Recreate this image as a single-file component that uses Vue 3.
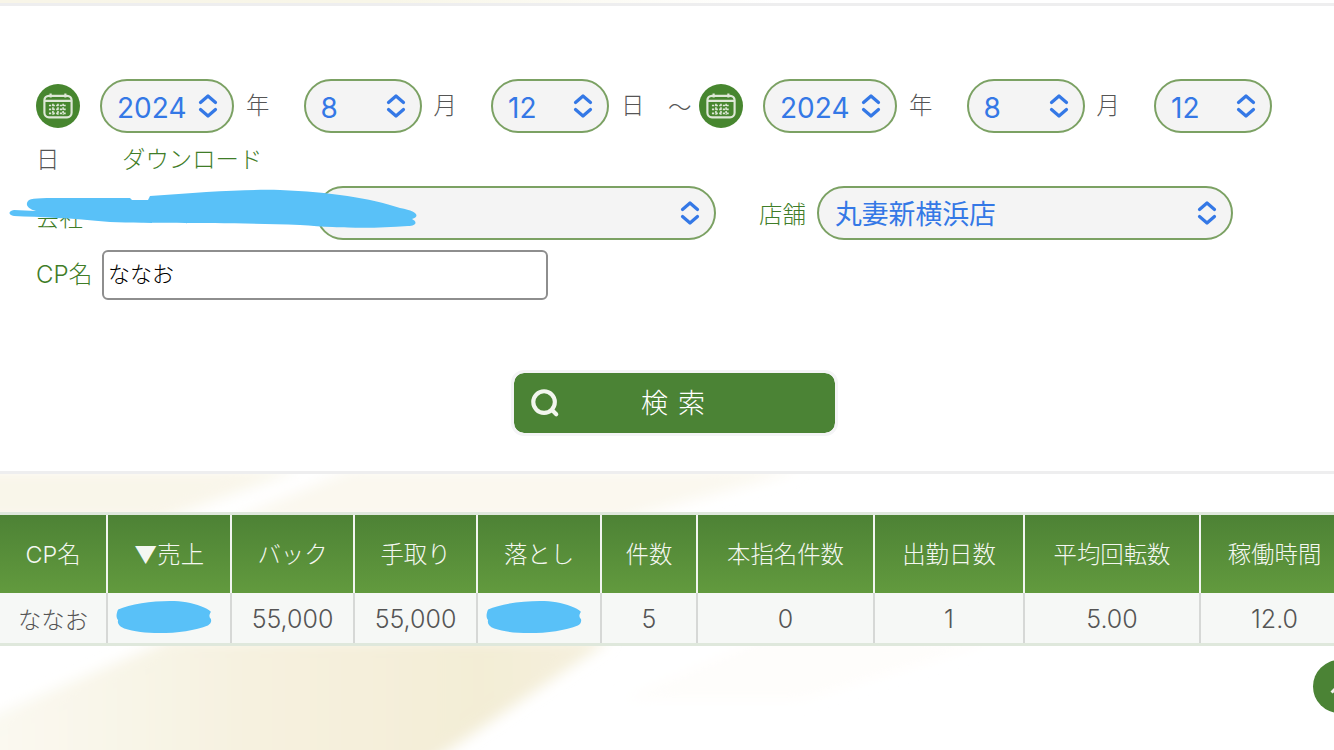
<script setup>
const columns = [
  { label: 'CP名', value: 'ななお', width: 107 },
  { label: '▼売上', value: '', width: 124 },
  { label: 'バック', value: '55,000', width: 123 },
  { label: '手取り', value: '55,000', width: 123 },
  { label: '落とし', value: '', width: 124 },
  { label: '件数', value: '5', width: 96 },
  { label: '本指名件数', value: '0', width: 177 },
  { label: '出勤日数', value: '1', width: 150 },
  { label: '平均回転数', value: '5.00', width: 176 },
  { label: '稼働時間', value: '12.0', width: 148 }
]
const dateRange = [
  { first: true, year: '2024', month: '8', day: '12' },
  { first: false, year: '2024', month: '8', day: '12' }
]
</script>

<template>
  <div class="page">
    <svg class="backdrop" viewBox="0 0 1334 750" preserveAspectRatio="none" aria-hidden="true">
      <defs>
        <linearGradient id="band" x1="0" y1="0.5" x2="1" y2="0.5">
          <stop offset="0" stop-color="#fbfaf3" />
          <stop offset="0.45" stop-color="#f6f1df" />
          <stop offset="0.8" stop-color="#f3edd6" />
          <stop offset="1" stop-color="#f5f0dd" />
        </linearGradient>
        <linearGradient id="strip" x1="0" y1="0" x2="1" y2="0">
          <stop offset="0" stop-color="#f8f5e8" />
          <stop offset="0.5" stop-color="#f8f6e8" />
          <stop offset="1" stop-color="#ffffff" />
        </linearGradient>
        <filter id="soft" x="-10%" y="-10%" width="120%" height="120%"><feGaussianBlur stdDeviation="7" /></filter>
      </defs>
      <g filter="url(#soft)">
        <path d="M-40 520 L-40 470 L300 470 L160 520Z" fill="#f9f6ea" />
        <path d="M230 520 L350 470 L800 470 L620 520Z" fill="#fbf8ef" />
        <path d="M-40 790 L-40 730 L170 640 L610 640 L390 790Z" fill="url(#band)" />
        <path d="M620 700 L760 640 L1000 640 L800 700Z" fill="#fefdfb" />
      </g>
      <path d="M0 0 H780 V3 H0Z" fill="url(#strip)" />
    </svg>

    <section class="panel">
      <div class="dates">
        <template v-for="(range, i) in dateRange" :key="i">
          <span class="cal">
            <svg width="34" height="34" viewBox="0 0 30 30" fill="none" stroke="#dfe8d8" stroke-width="1.9">
              <rect x="3" y="6" width="24" height="19" rx="4" />
              <path d="M8.5 4v3.5M21.5 4v3.5M3 10.5h24" />
              <path d="M7 14.5h16M7 18h16M7 21.5h16M10.5 13v10M15 13v10M19.5 13v10" stroke-width="1.4" stroke-dasharray="2 1.2" />
            </svg>
          </span>
          <div class="sel year">
            <span class="num">{{ range.year }}</span>
            <svg class="updown" width="20" height="26" viewBox="0 0 20 26" fill="none" stroke="#3478e6" stroke-width="3.2" stroke-linecap="round" stroke-linejoin="round"><path d="M2.5 9.5 10 3l7.5 6.5M2.5 16.5 10 23l7.5-6.5" /></svg>
          </div>
          <span class="unit">年</span>
          <div class="sel small">
            <span class="num">{{ range.month }}</span>
            <svg class="updown" width="20" height="26" viewBox="0 0 20 26" fill="none" stroke="#3478e6" stroke-width="3.2" stroke-linecap="round" stroke-linejoin="round"><path d="M2.5 9.5 10 3l7.5 6.5M2.5 16.5 10 23l7.5-6.5" /></svg>
          </div>
          <span class="unit">月</span>
          <div class="sel small">
            <span class="num">{{ range.day }}</span>
            <svg class="updown" width="20" height="26" viewBox="0 0 20 26" fill="none" stroke="#3478e6" stroke-width="3.2" stroke-linecap="round" stroke-linejoin="round"><path d="M2.5 9.5 10 3l7.5 6.5M2.5 16.5 10 23l7.5-6.5" /></svg>
          </div>
          <span class="unit day" :class="{ tail: !range.first }">日</span>
          <span v-if="range.first" class="tilde">〜</span>
        </template>
        <a class="download">ダウンロード</a>
      </div>

      <div class="shop-row">
        <span class="label company">会社</span>
        <div class="sel company-sel">
          <span></span>
          <svg class="updown" width="20" height="26" viewBox="0 0 20 26" fill="none" stroke="#3478e6" stroke-width="3.2" stroke-linecap="round" stroke-linejoin="round"><path d="M2.5 9.5 10 3l7.5 6.5M2.5 16.5 10 23l7.5-6.5" /></svg>
        </div>
        <span class="label shop">店舗</span>
        <div class="sel shop-sel">
          <span class="name">丸妻新横浜店</span>
          <svg class="updown" width="20" height="26" viewBox="0 0 20 26" fill="none" stroke="#3478e6" stroke-width="3.2" stroke-linecap="round" stroke-linejoin="round"><path d="M2.5 9.5 10 3l7.5 6.5M2.5 16.5 10 23l7.5-6.5" /></svg>
        </div>
        <svg class="scribble top" width="430" height="60" viewBox="0 0 430 60" aria-hidden="true">
          <path d="M14 30 L36 31 C28 29 25 25 28 21 C30 18 40 18 60 18 L130 18 L132 20 L148 20 L150 16 C200 12 250 9 280 10 C330 12 370 18 400 28 C418 31 420 37 412 39 C418 42 416 46 408 46 C370 49 340 48 300 45 C220 42 160 44 110 42 C70 38 40 37 14 36 C8 35 8 31 14 30Z" fill="#59c1f8" />
        </svg>
      </div>

      <div class="name-row">
        <span class="label">CP名</span>
        <input class="name-input" value="ななお" />
      </div>

      <div class="actions">
        <button class="search" type="button">
          <svg class="lens" width="30" height="30" viewBox="0 0 32 32" fill="none" stroke="#f2f6ee" stroke-width="4.4" stroke-linecap="round"><circle cx="15" cy="15" r="11.5" /><path d="M24 24l4 4" /></svg>
          <span class="search-text">検 索</span>
        </button>
      </div>
    </section>

    <div class="table-wrap">
      <table>
        <colgroup>
          <col v-for="c in columns" :key="c.label" :style="{ width: c.width + 'px' }" />
        </colgroup>
        <thead>
          <tr><th v-for="c in columns" :key="c.label"><span class="th-text">{{ c.label }}</span></th></tr>
        </thead>
        <tbody>
          <tr>
            <td v-for="c in columns" :key="c.label">
              <template v-if="c.value">{{ c.value }}</template>
              <svg v-else class="scribble cell" width="102" height="38" viewBox="0 0 100 36" preserveAspectRatio="none" aria-hidden="true">
                <path d="M5 10C20 3 55 0 72 3c10 2 20 5 24 9-2 3-2 5 0 7 1 3-1 5-3 6-20 8-60 10-82 3-5-2-7-5-6-8-2-2-2-6 0-10z" fill="#59c1f8" />
              </svg>
            </td>
          </tr>
        </tbody>
      </table>
    </div>

    <div class="to-top"></div>
  </div>
</template>

<style>
html, body { margin: 0; background: #fff; }
</style>

<style scoped>
.page {
  position: relative;
  width: 1334px;
  height: 750px;
  overflow: hidden;
  padding-top: 3px;
  box-sizing: border-box;
  font-family: "Inter", "Noto Sans CJK JP", sans-serif;
  font-size: 23.4px;
  font-weight: 300;
  color: #555;
}
.backdrop { position: absolute; inset: 0; width: 100%; height: 100%; }
.panel {
  position: relative;
  background: #fff;
  border-top: 3px solid #eeeeef;
  border-bottom: 3px solid #eeeeef;
  height: 471px;
  box-sizing: border-box;
  padding: 73px 36px 0;
}
.dates { display: flex; flex-wrap: wrap; align-items: center; }
.cal {
  width: 44px;
  height: 44px;
  border-radius: 50%;
  background: #47862f;
  display: flex;
  align-items: center;
  justify-content: center;
  margin-right: 20px;
  flex: none;
}
.sel {
  display: flex;
  align-items: center;
  justify-content: space-between;
  height: 54px;
  box-sizing: border-box;
  border: 2px solid #7ba163;
  border-radius: 27px;
  background: #f4f4f4;
  color: #3478e6;
  padding: 0 14px 0 14px;
  flex: none;
}
.year { width: 134px; }
.small { width: 118px; }
.num {
  font-size: 28px;
  font-weight: 400;
  padding: 3px 0 0 1px;
}
.unit {
  width: 57.5px;
  padding-left: 12px;
  line-height: 54px;
  height: 54px;
  flex: none;
}
.day { width: 47px; }
.tail { width: 30px; padding-left: 0; height: 30px; line-height: 30px; margin-top: 12px; }
.tilde { width: 31px; flex: none; color: #555; }
.download {
  color: #3f7d28;
  height: 30px;
  line-height: 30px;
  margin: 12px 0 0 56px;
}
.shop-row { position: relative; display: flex; align-items: center; margin-top: 11px; }
.label { color: #3f7d28; flex: none; }
.company { width: 280px; padding-top: 6px; }
.company-sel { width: 400px; }
.shop { margin-left: 43px; width: 58px; }
.shop-sel { width: 416px; padding-left: 16px; }
.name { color: #3478e6; font-size: 26.8px; font-weight: 400; padding-bottom: 2px; }
.scribble { position: absolute; }
.scribble.top { left: -36px; top: -6px; }
.name-row { display: flex; align-items: center; margin-top: 10px; }
.name-row .label { width: 66px; padding-bottom: 6px; font-size: 24px; }
.name-input {
  width: 446px;
  height: 50px;
  box-sizing: border-box;
  border: 2px solid #8e8e8e;
  border-radius: 6px;
  padding: 0 4px 7px;
  background: #fff;
  color: #000;
  font: 300 22px "Noto Sans CJK JP", sans-serif;
  outline: none;
}
.actions { display: flex; justify-content: center; margin-top: 70px; margin-left: 14px; }
.search {
  position: relative;
  width: 327px;
  height: 66px;
  box-sizing: border-box;
  border: 3px solid #f4f4f6;
  border-radius: 13px;
  background: #4b8335;
  background-clip: padding-box;
  color: #fff;
  font: 300 27px "Noto Sans CJK JP", sans-serif;
  letter-spacing: 2px;
  padding: 0 0 3px;
}
.lens { position: absolute; left: 16px; top: 15px; }
.table-wrap {
  position: absolute;
  left: 0;
  top: 512px;
  width: 1334px;
  overflow: hidden;
  border-top: 3px solid #dfe8dc;
  border-bottom: 3px solid #dfe8dc;
}
table { border-collapse: collapse; table-layout: fixed; width: 1348px; }
th {
  height: 78px;
  padding: 0 0 2px;
  box-sizing: border-box;
  font-weight: 300;
  color: #f4f7f1;
  background: linear-gradient(#4d8235, #629a3e);
  border-left: 2px solid #f2f5f0;
  white-space: nowrap;
}
th:first-child, td:first-child { border-left: 0; font-size: 23.4px; }
td {
  position: relative;
  height: 50px;
  box-sizing: border-box;
  padding: 2px 0 0;
  text-align: center;
  background: #f6f8f6;
  border-left: 2px solid #d6d8d6;
  font-size: 25px;
  color: #555;
  white-space: nowrap;
}
.scribble.cell { position: absolute; left: 5px; top: 6px; }
.to-top {
  position: absolute;
  left: 1313px;
  top: 660px;
  width: 53px;
  height: 53px;
  border-radius: 50%;
  background: #4b8335;
}
.to-top::after {
  content: "";
  position: absolute;
  left: 21px;
  top: 23px;
  width: 14px;
  height: 14px;
  border-left: 3px solid #eef3ea;
  border-top: 3px solid #eef3ea;
  transform: rotate(45deg);
}
</style>
